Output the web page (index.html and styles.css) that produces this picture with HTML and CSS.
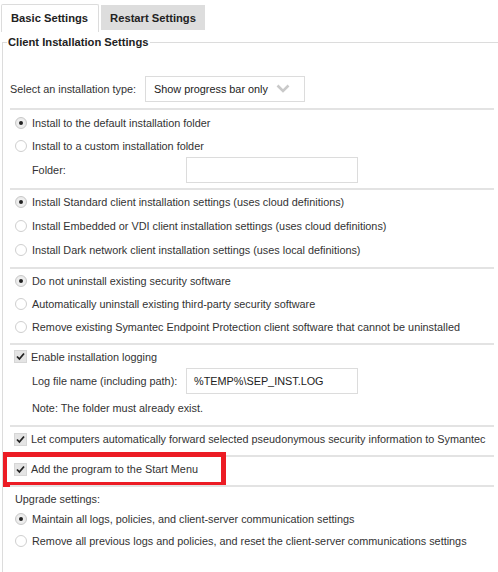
FILE: index.html
```html
<!DOCTYPE html>
<html>
<head>
<meta charset="utf-8">
<link rel="stylesheet" href="styles.css">
</head>
<body>
<div class="tabs">
  <div class="tab tab-active">Basic Settings</div>
  <div class="tab tab-inactive">Restart Settings</div>
</div>
<fieldset class="panel">
  <legend class="legend">Client Installation Settings</legend>

  <div class="sec sec-select">
    <div class="row">
      <span class="label-select">Select an installation type:</span>
      <div class="dropdown">
        <span>Show progress bar only</span>
        <svg class="chev" width="14" height="9" viewBox="0 0 14 9"><path d="M1.5 1.5 L7 7 L12.5 1.5" fill="none" stroke="#c9c9c9" stroke-width="2.6"/></svg>
      </div>
    </div>
  </div>

  <div class="sec sec-a">
    <div class="row r23"><span class="radio checked"></span>Install to the default installation folder</div>
    <div class="row r23"><span class="radio"></span>Install to a custom installation folder</div>
    <div class="row r26 sub"><span class="sublabel">Folder:</span><span class="input"></span></div>
  </div>

  <div class="sec sec-b">
    <div class="row r24"><span class="radio checked"></span>Install Standard client installation settings (uses cloud definitions)</div>
    <div class="row r24"><span class="radio"></span>Install Embedded or VDI client installation settings (uses cloud definitions)</div>
    <div class="row r24"><span class="radio"></span>Install Dark network client installation settings (uses local definitions)</div>
  </div>

  <div class="sec sec-c">
    <div class="row r23"><span class="radio checked"></span>Do not uninstall existing security software</div>
    <div class="row r23"><span class="radio"></span>Automatically uninstall existing third-party security software</div>
    <div class="row r23"><span class="radio"></span>Remove existing Symantec Endpoint Protection client software that cannot be uninstalled</div>
  </div>

  <div class="sec sec-d">
    <div class="row r23"><span class="check"><svg width="11" height="11" viewBox="0 0 11 11"><path d="M2 5.5 L4.4 8 L9 2.5" fill="none" stroke="#222" stroke-width="1.8"/></svg></span>Enable installation logging</div>
    <div class="row r26 sub"><span class="sublabel">Log file name (including path):</span><span class="input">%TEMP%\SEP_INST.LOG</span></div>
    <div class="row r27 sub">Note: The folder must already exist.</div>
  </div>

  <div class="sec sec-e">
    <div class="row r24"><span class="check"><svg width="11" height="11" viewBox="0 0 11 11"><path d="M2 5.5 L4.4 8 L9 2.5" fill="none" stroke="#222" stroke-width="1.8"/></svg></span>Let computers automatically forward selected pseudonymous security information to Symantec</div>
  </div>

  <div class="sec sec-f">
    <div class="highlight"></div>
    <div class="row r24"><span class="check"><svg width="11" height="11" viewBox="0 0 11 11"><path d="M2 5.5 L4.4 8 L9 2.5" fill="none" stroke="#222" stroke-width="1.8"/></svg></span>Add the program to the Start Menu</div>
  </div>

  <div class="sec sec-g">
    <div class="row r18 upg">Upgrade settings:</div>
    <div class="row r22"><span class="radio checked"></span>Maintain all logs, policies, and client-server communication settings</div>
    <div class="row r22"><span class="radio"></span>Remove all previous logs and policies, and reset the client-server communications settings</div>
  </div>
</fieldset>
</body>
</html>
```

FILE: styles.css
```css
html, body {
  margin: 0;
  padding: 0;
  background: #fff;
}
body {
  font-family: "Liberation Sans", Arial, sans-serif;
  font-size: 10.85px;
  color: #333;
  overflow: hidden;
}
.tabs {
  display: flex;
  align-items: flex-start;
  padding: 4px 0 0 1px;
  gap: 2px;
}
.tab {
  display: flex;
  align-items: center;
  font-weight: bold;
  font-size: 11.2px;
  color: #222;
  box-sizing: border-box;
}
.tab-active {
  height: 28px;
  padding: 0 10px 2px 9px;
  border: 1px solid #dcdcdc;
  border-bottom: none;
  border-radius: 2px 2px 0 0;
  background: #fff;
}
.tab-inactive {
  margin-top: 1px;
  height: 25px;
  padding: 0 9px 0 9px;
  background: #dddddd;
}
.panel {
  margin: 3px 0 0 2px;
  padding: 0 4px 40px 7px;
  border: none;
  border-top: 1px solid #dcdcdc;
  border-left: 1px solid #dcdcdc;
  min-width: 0;
}
.legend {
  margin-left: -3px;
  padding: 0 2px 0 1px;
  font-weight: bold;
  font-size: 11.2px;
  color: #222;
  line-height: 14px;
}
.sec {
  position: relative;
  border-top: 2px solid #e3e3e3;
}
.sec-select {
  border-top: none;
  padding: 27px 0 6px;
}
.sec-a { padding: 1px 0 5px; }
.sec-b { padding: 0 0 5px; }
.sec-c { padding: 0 0 5px; }
.sec-d { padding: 0 0 4px; }
.sec-e { padding: 0 0 4px; }
.sec-f { padding: 0 0 4px; }
.sec-g { padding: 3px 0 0; }

.row {
  display: flex;
  align-items: center;
  padding-left: 5px;
  white-space: nowrap;
}
.r18 { height: 18px; }
.r22 { height: 22px; }
.r23 { height: 23px; }
.r24 { height: 24px; }
.r26 { height: 26px; }
.r27 { height: 27px; }
.sub { padding-left: 22px; }
.sec-select .row { padding-left: 0; }

.label-select {
  width: 135px;
}
.dropdown {
  box-sizing: border-box;
  width: 160px;
  height: 26px;
  border: 1px solid #dcdcdc;
  display: flex;
  align-items: center;
  padding-left: 8px;
  gap: 8px;
  color: #222;
}
.chev { display: block; margin-top: -1px; }

.radio {
  box-sizing: border-box;
  width: 12px;
  height: 12px;
  border-radius: 50%;
  border: 1px solid #cfcfcf;
  background: #fff;
  margin-right: 5px;
  margin-left: 0;
  flex: none;
  position: relative;
}
.radio.checked {
  background: radial-gradient(circle, #f4f4f4 0%, #e6e6e6 100%);
  border-color: #c8c8c8;
}
.radio.checked::after {
  content: "";
  position: absolute;
  left: 3px;
  top: 3px;
  width: 4px;
  height: 4px;
  border-radius: 50%;
  background: #222;
}
.check {
  box-sizing: border-box;
  width: 13px;
  height: 13px;
  background: #e4e4e4;
  border: 1px solid #d6d6d6;
  margin-left: -1px;
  margin-right: 4px;
  flex: none;
  display: flex;
  align-items: center;
  justify-content: center;
}
.check svg { display: block; }
.sublabel {
  width: 154px;
}
.input {
  box-sizing: border-box;
  width: 172px;
  height: 26px;
  border: 1px solid #dcdcdc;
  display: flex;
  align-items: center;
  padding-left: 7px;
  color: #222;
}
.upg { padding-left: 5px; }
.highlight {
  position: absolute;
  left: -7px;
  top: -5px;
  width: 223px;
  height: 35px;
  box-sizing: border-box;
  border: 5px solid #ec1c24;
  border-left-width: 4px;
  pointer-events: none;
}
```
